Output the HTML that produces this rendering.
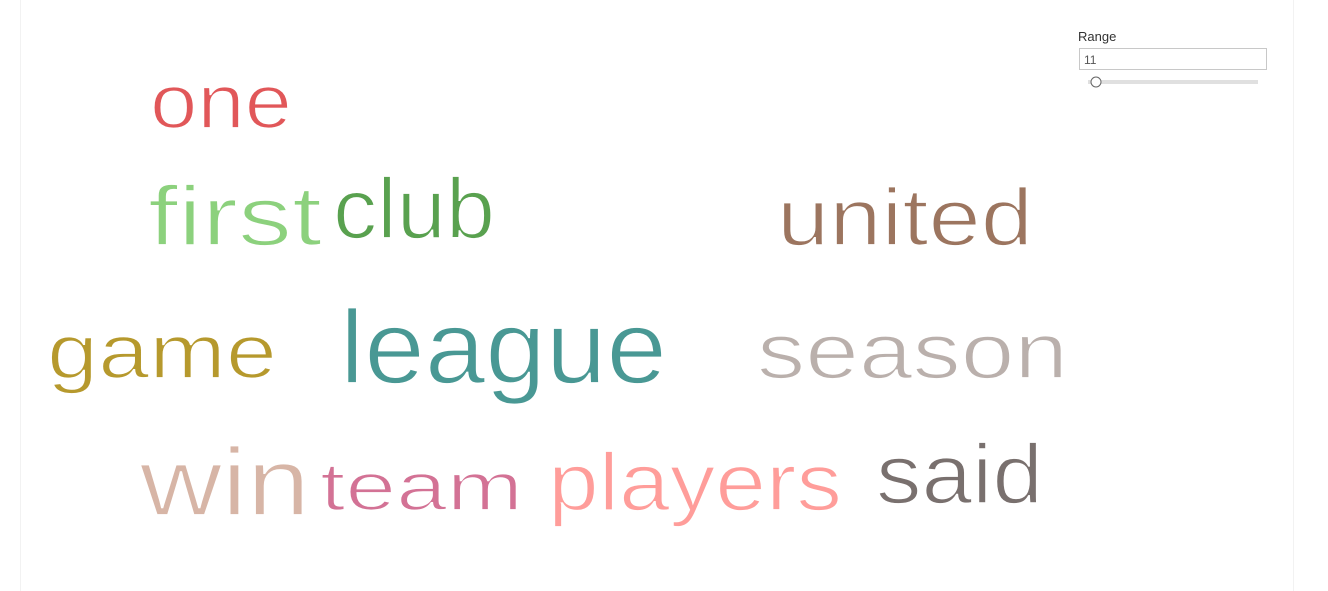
<!DOCTYPE html>
<html><head><style>
html,body{margin:0;padding:0;background:#fff;width:1328px;height:591px;overflow:hidden;font-family:"Liberation Sans",sans-serif}
.vl{position:absolute;top:0;width:1px;height:591px;background:#f2f2f2}
.w text{stroke:#fff;stroke-width:1.8px;paint-order:normal}
</style></head><body>
<div class="vl" style="left:20px"></div>
<div class="vl" style="left:1293px"></div>
<svg width="1328" height="591" style="position:absolute;left:0;top:0" font-family="Liberation Sans, sans-serif">
<g class="w">
<text x="150" y="128" font-size="77" fill="#e15759" textLength="142" lengthAdjust="spacingAndGlyphs">one</text>
<text x="148" y="245" font-size="84" fill="#8cd17d" textLength="174" lengthAdjust="spacingAndGlyphs">first</text>
<text x="333" y="238" font-size="85" fill="#59a14f" textLength="162" lengthAdjust="spacingAndGlyphs">club</text>
<text x="777" y="245" font-size="81" fill="#9c755f" textLength="256" lengthAdjust="spacingAndGlyphs">united</text>
<text x="47" y="378" font-size="77" fill="#b6992d" textLength="230" lengthAdjust="spacingAndGlyphs">game</text>
<text x="340" y="383" font-size="104" fill="#499894" textLength="327" lengthAdjust="spacingAndGlyphs">league</text>
<text x="757" y="378" font-size="79" fill="#bab0ac" textLength="311" lengthAdjust="spacingAndGlyphs">season</text>
<text x="140" y="515" font-size="96" fill="#d7b5a6" textLength="170" lengthAdjust="spacingAndGlyphs">win</text>
<text x="320" y="510" font-size="68" fill="#d37295" textLength="203" lengthAdjust="spacingAndGlyphs">team</text>
<text x="548" y="510" font-size="82" fill="#ff9d9a" textLength="294" lengthAdjust="spacingAndGlyphs">players</text>
<text x="876" y="503" font-size="84" fill="#79706e" textLength="167" lengthAdjust="spacingAndGlyphs">said</text>
</g>
<text x="1078" y="41" font-size="13" fill="#333">Range</text>
<rect x="1079.5" y="48.5" width="187" height="21" fill="#fff" stroke="#c8c8c8"/>
<text x="1084" y="64" font-size="12" fill="#555">11</text>
<rect x="1088" y="80" width="170" height="4" fill="#e0e0e0"/>
<circle cx="1096" cy="82" r="5" fill="#fff" stroke="#666" stroke-width="1"/>
</svg>
</body></html>
